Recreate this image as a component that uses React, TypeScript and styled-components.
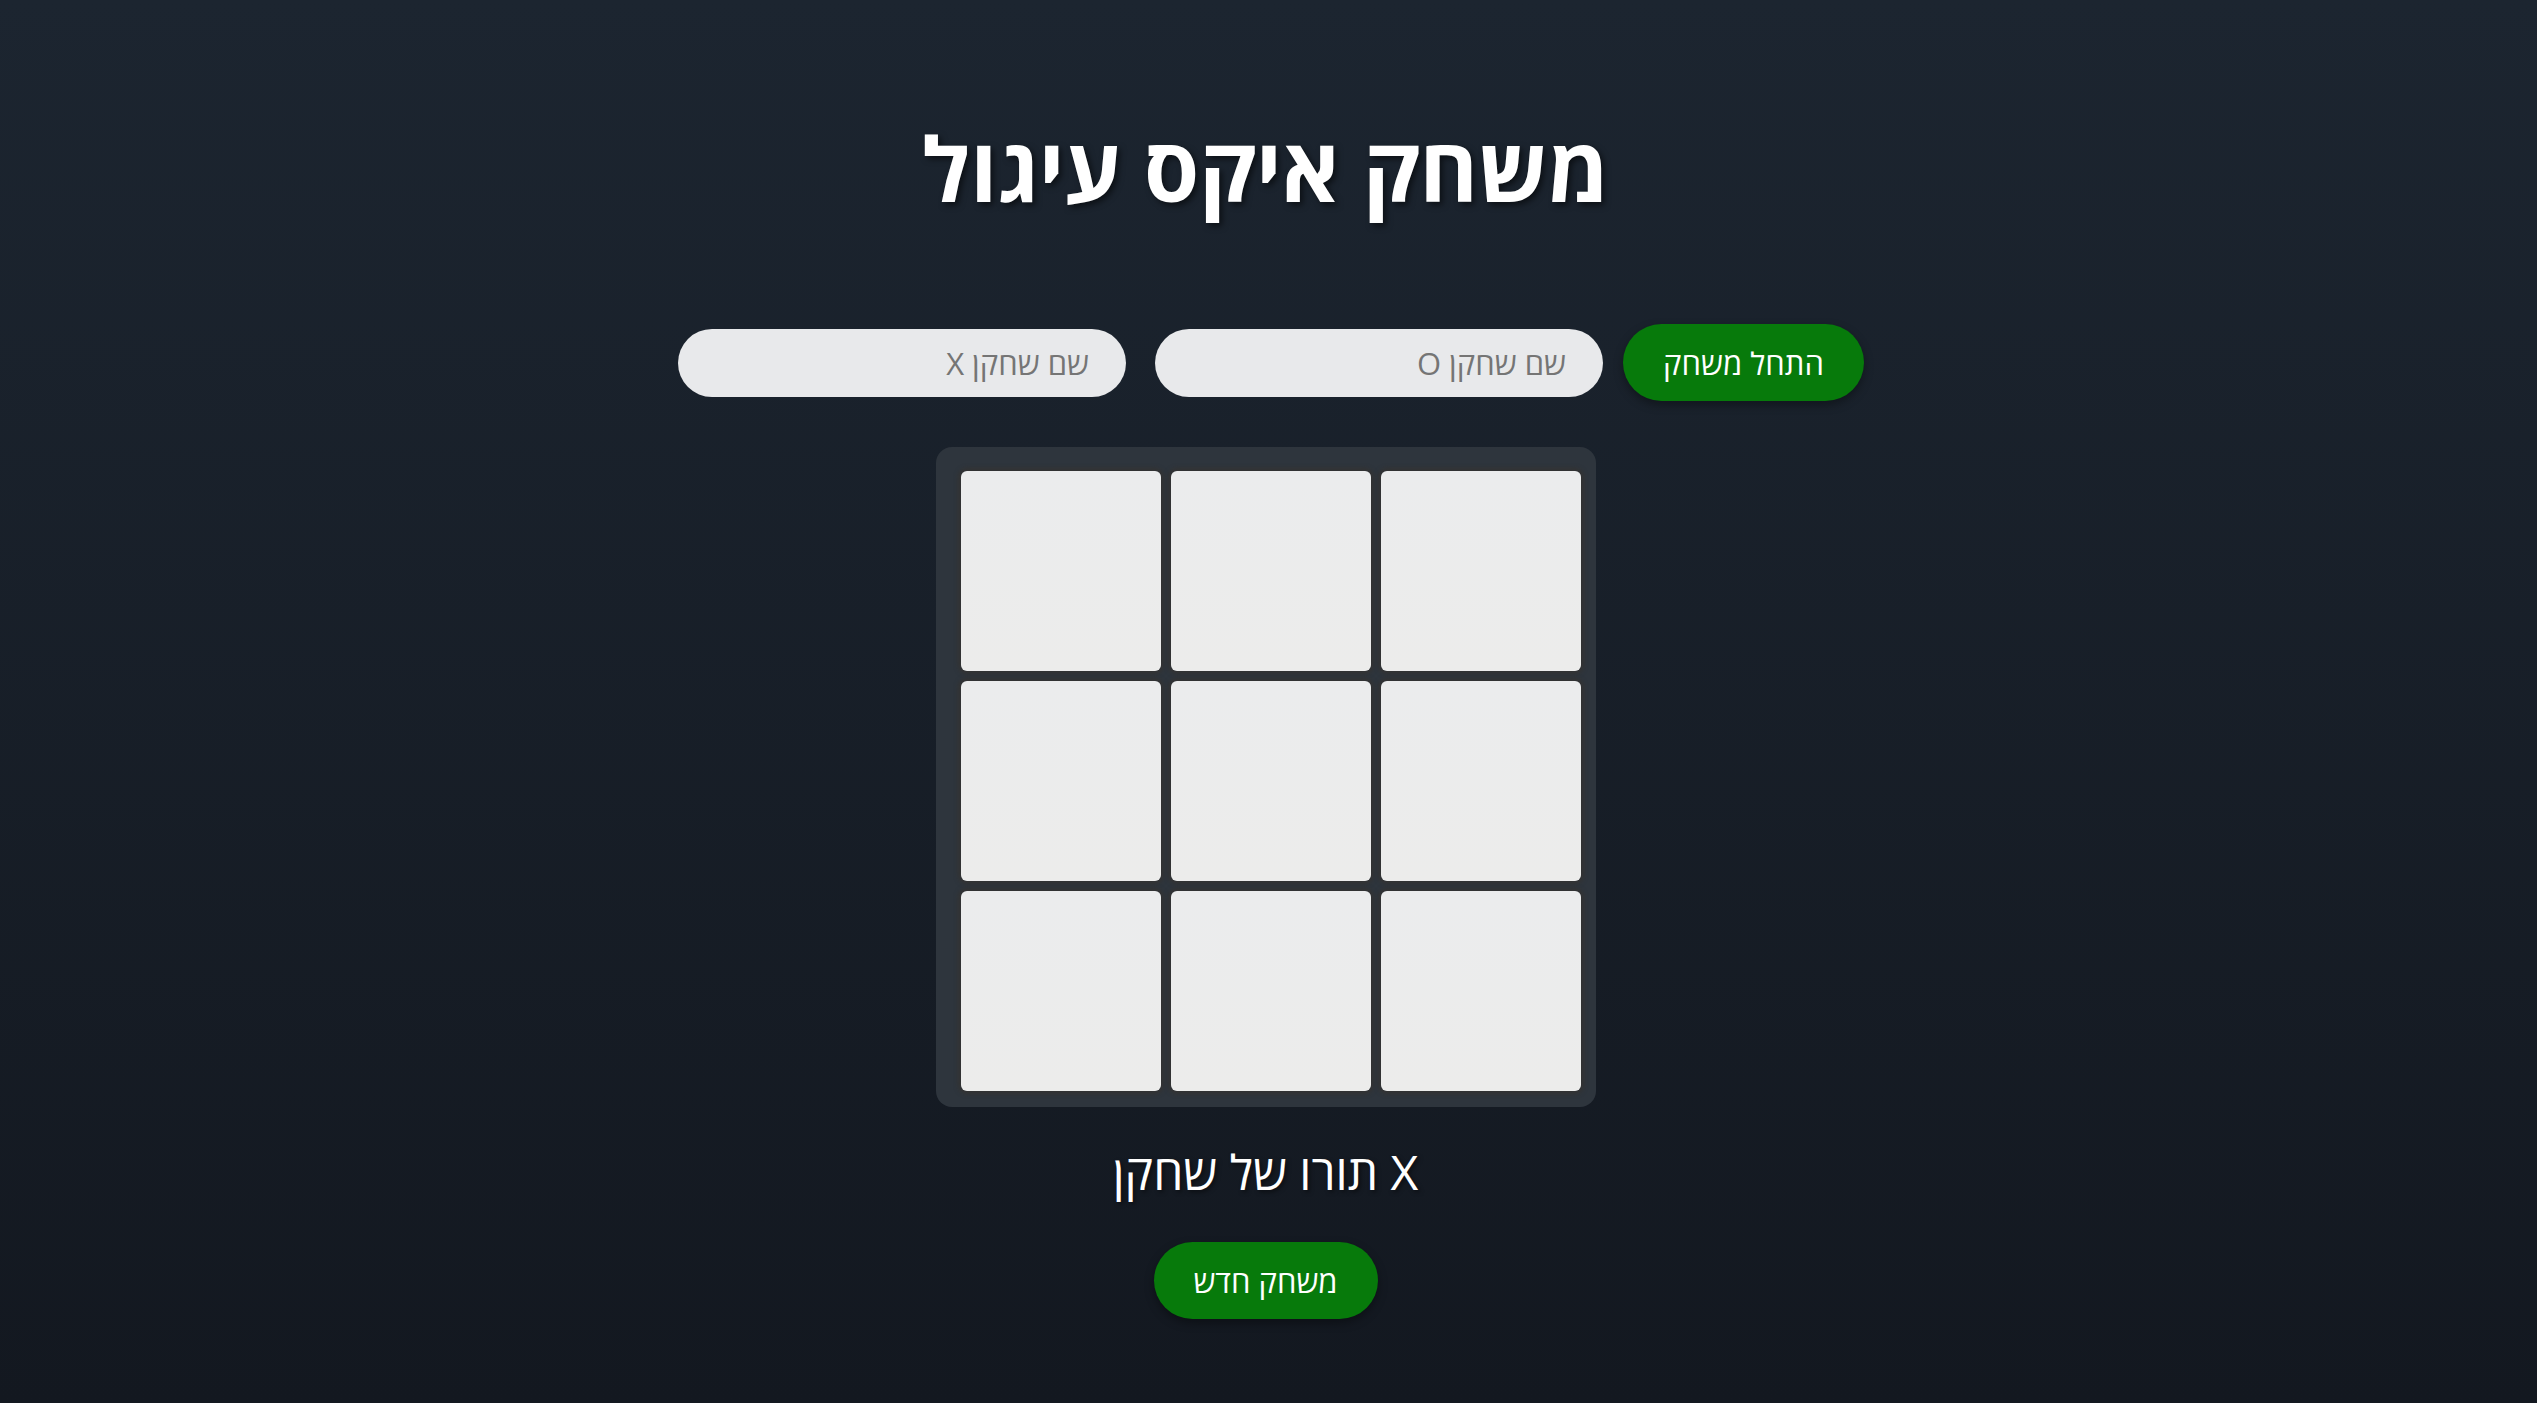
import React from "react";
import styled, { createGlobalStyle } from "styled-components";

const GlobalStyle = createGlobalStyle`
  html, body {
    margin: 0;
    padding: 0;
  }
  body {
    min-height: 100vh;
    background: linear-gradient(180deg, #1c2530 0%, #131820 100%);
    font-family: "Open Sans", "Noto Sans", sans-serif;
    color: #ffffff;
  }
  #root {
    min-height: 100vh;
  }
`;

const Page = styled.main`
  direction: rtl;
  min-height: 100vh;
  box-sizing: border-box;
  display: flex;
  flex-direction: column;
  align-items: center;
  padding: 123px 6px 0 0;
`;

const Title = styled.h1`
  margin: 0;
  font-size: 89px;
  line-height: 1;
  font-weight: 700;
  color: #ffffff;
  text-shadow: 3px 3px 6px rgba(0, 0, 0, 0.55);
`;

const Controls = styled.div`
  margin-top: 112px;
  display: flex;
  align-items: center;
  padding-left: 11px;
`;

const PillButton = styled.button<{ $width: number }>`
  width: ${(p) => p.$width}px;
  height: 77px;
  padding: 0;
  border: none;
  border-radius: 39px;
  background: #077a0b;
  color: #ffffff;
  font-family: "Open Sans", "Noto Sans", sans-serif;
  font-size: 31px;
  box-shadow: 0 4px 10px rgba(0, 0, 0, 0.35);
  cursor: pointer;
`;

const StartButton = styled(PillButton)`
  margin-left: 20px;
`;

const NameInput = styled.input<{ $last?: boolean }>`
  width: 448px;
  height: 68px;
  box-sizing: border-box;
  border: none;
  border-radius: 34px;
  background: #e8e9eb;
  padding: 0 37px;
  margin-left: ${(p) => (p.$last ? 0 : 29)}px;
  font-family: "Open Sans", "Noto Sans", sans-serif;
  font-size: 31px;
  color: #222;
  direction: rtl;
  outline: none;
  &::placeholder {
    color: #757575;
  }
`;

const Board = styled.div`
  margin-top: 46px;
  width: 660px;
  height: 660px;
  box-sizing: border-box;
  padding: 24px 15px 16px 24px;
  border-radius: 16px;
  background: #2e353d;
  display: grid;
  grid-template-columns: repeat(3, 200px);
  grid-template-rows: repeat(3, 200px);
  gap: 10px;
`;

const Cell = styled.button`
  width: 200px;
  height: 200px;
  border: none;
  padding: 0;
  border-radius: 6px;
  background: linear-gradient(180deg, #ebeced 0%, #ececeb 100%);
  box-shadow: 0 0 4px 3px #333333;
  cursor: pointer;
`;

const Status = styled.p`
  direction: ltr;
  margin: 41px 0 0;
  font-size: 48px;
  line-height: 1;
  color: #ffffff;
  text-shadow: 2px 2px 4px rgba(0, 0, 0, 0.5);
`;

const ResetButton = styled(PillButton)`
  margin-top: 46px;
`;

export default function App() {
  const cells = Array.from({ length: 9 }, (_, i) => i);
  return (
    <>
      <GlobalStyle />
      <Page>
        <Title>משחק איקס עיגול</Title>
        <Controls>
          <StartButton $width={241}>התחל משחק</StartButton>
          <NameInput placeholder="שם שחקן O" />
          <NameInput placeholder="שם שחקן X" $last />
        </Controls>
        <Board>
          {cells.map((i) => (
            <Cell key={i} aria-label={`cell ${i + 1}`} />
          ))}
        </Board>
        <Status>תורו של שחקן X</Status>
        <ResetButton $width={224}>משחק חדש</ResetButton>
      </Page>
    </>
  );
}
